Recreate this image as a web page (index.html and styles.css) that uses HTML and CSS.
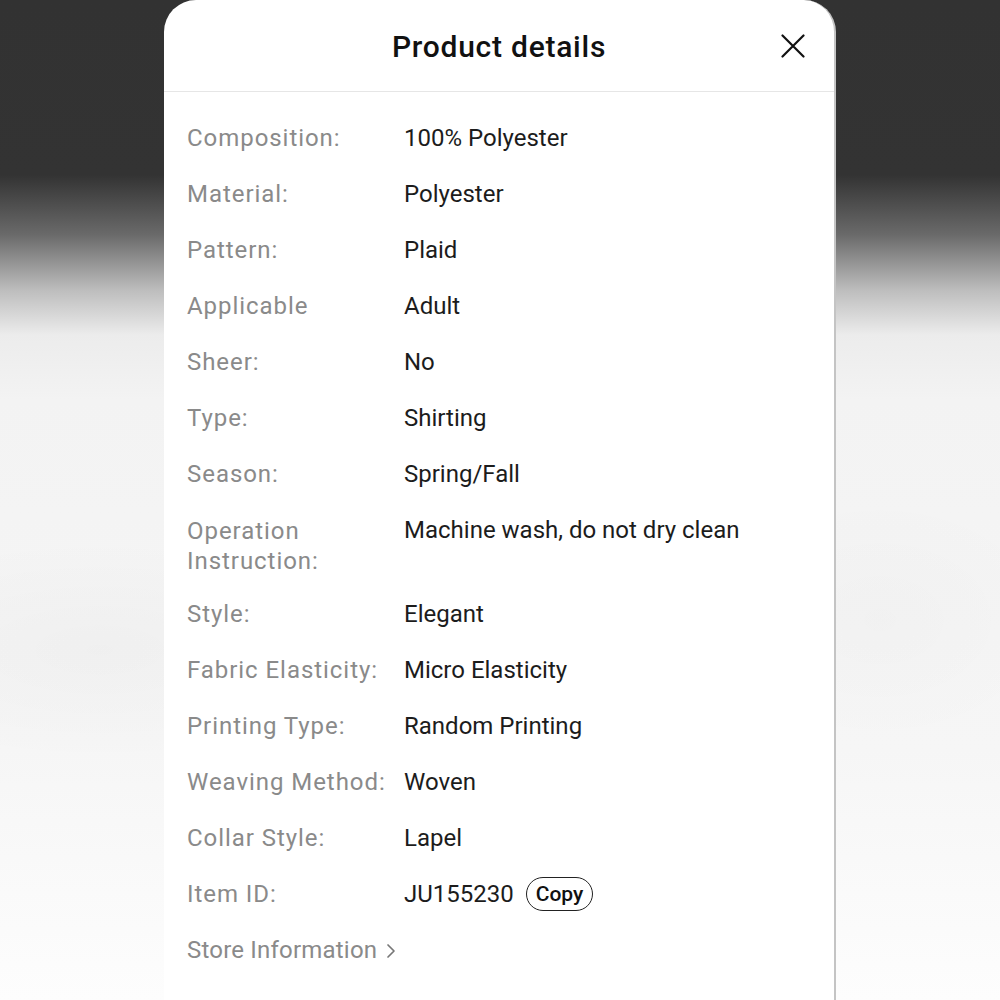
FILE: index.html
```html
<!DOCTYPE html>
<html lang="en">
<head>
<meta charset="utf-8">
<title>Product details</title>
<link rel="stylesheet" href="styles.css">
</head>
<body>
<div class="stage">
  <section class="sheet">
    <header class="sheet-head">
      <h1 class="sheet-title">Product details</h1>
      <button class="close" aria-label="Close">
        <svg width="24" height="24" viewBox="0 0 24 24"><path d="M1.5 1.5 L22.5 22.5 M22.5 1.5 L1.5 22.5" stroke="#111" stroke-width="2.2" fill="none" stroke-linecap="round"/></svg>
      </button>
    </header>
    <div class="sheet-body">
      <dl class="attrs">
        <div class="row"><dt>Composition:</dt><dd>100% Polyester</dd></div>
        <div class="row"><dt>Material:</dt><dd>Polyester</dd></div>
        <div class="row"><dt>Pattern:</dt><dd>Plaid</dd></div>
        <div class="row"><dt>Applicable</dt><dd>Adult</dd></div>
        <div class="row"><dt>Sheer:</dt><dd>No</dd></div>
        <div class="row"><dt>Type:</dt><dd>Shirting</dd></div>
        <div class="row"><dt>Season:</dt><dd>Spring/Fall</dd></div>
        <div class="row row-tall"><dt>Operation Instruction:</dt><dd>Machine wash, do not dry clean</dd></div>
        <div class="row"><dt>Style:</dt><dd>Elegant</dd></div>
        <div class="row"><dt>Fabric Elasticity:</dt><dd>Micro Elasticity</dd></div>
        <div class="row"><dt>Printing Type:</dt><dd>Random Printing</dd></div>
        <div class="row"><dt>Weaving Method:</dt><dd>Woven</dd></div>
        <div class="row"><dt>Collar Style:</dt><dd>Lapel</dd></div>
        <div class="row row-id"><dt>Item ID:</dt><dd class="id-cell"><span>JU155230</span><button class="copy">Copy</button></dd></div>
      </dl>
      <a class="store-link" href="#">Store Information
        <svg width="10" height="16" viewBox="0 0 10 16"><path d="M2 2 L8 8 L2 14" stroke="#777" stroke-width="1.7" fill="none" stroke-linecap="round" stroke-linejoin="round"/></svg>
      </a>
    </div>
  </section>
</div>
</body>
</html>
```
FILE: styles.css
```css
html, body {
  margin: 0;
  padding: 0;
  height: 100%;
}
body {
  font-family: Roboto, "Noto Sans", "Liberation Sans", sans-serif;
  background:
    radial-gradient(ellipse 420px 160px at 100px 650px, rgba(0,0,0,0.025), rgba(0,0,0,0) 70%),
    radial-gradient(ellipse 260px 180px at 880px 620px, rgba(0,0,0,0.015), rgba(0,0,0,0) 70%),
    linear-gradient(to bottom, #323232 0px, #333333 175px, #6a6a6a 235px, #bdbdbd 290px, #ececec 335px, #f3f3f3 400px, #f6f6f6 750px, #fdfdfd 1000px);
  overflow: hidden;
}
.stage {
  display: flex;
  justify-content: center;
  height: 1000px;
}
.sheet {
  width: 670px;
  background: #fff;
  border-radius: 32px 32px 0 0;
  border-right: 2px solid #c4c4c4;
  display: flex;
  flex-direction: column;
}
.sheet-head {
  height: 91px;
  border-bottom: 1px solid #e6e6e6;
  display: flex;
  align-items: center;
  justify-content: center;
  position: relative;
}
.sheet-title {
  margin: 0;
  font-size: 30px;
  font-weight: 500;
  color: #111;
  letter-spacing: 0.75px;
  padding-top: 2px;
}
.close {
  position: absolute;
  right: 29px;
  top: 34px;
  padding: 0;
  border: 0;
  background: none;
  width: 24px;
  height: 24px;
  display: flex;
}
.sheet-body {
  padding: 19px 23px 0 23px;
}
.attrs {
  margin: 0;
}
.row {
  display: flex;
  padding: 13px 0 14px;
  line-height: 29px;
}
.row-tall {
  padding-bottom: 11px;
}
.row-tall dt {
  line-height: 30px;
}
.row dt {
  width: 217px;
  flex: none;
  font-size: 24px;
  letter-spacing: 0.95px;
  color: #8a8a8a;
  padding-right: 6px;
  box-sizing: border-box;
}
.row dd {
  margin: 0;
  font-size: 24px;
  color: #1c1c1c;
}
.row-id {
  align-items: center;
  padding: 10px 0 13px;
}
.id-cell {
  display: flex;
  align-items: center;
  gap: 12px;
}
.copy {
  font-family: inherit;
  font-size: 21px;
  font-weight: 500;
  color: #111;
  background: #fff;
  border: 1.5px solid #222;
  border-radius: 18px;
  padding: 0 9px;
  line-height: 31px;
  height: 34px;
}
.store-link {
  display: inline-flex;
  align-items: center;
  gap: 9px;
  margin-top: 12px;
  font-size: 24px;
  letter-spacing: 0.2px;
  line-height: 29px;
  color: #8a8a8a;
  text-decoration: none;
}
```
